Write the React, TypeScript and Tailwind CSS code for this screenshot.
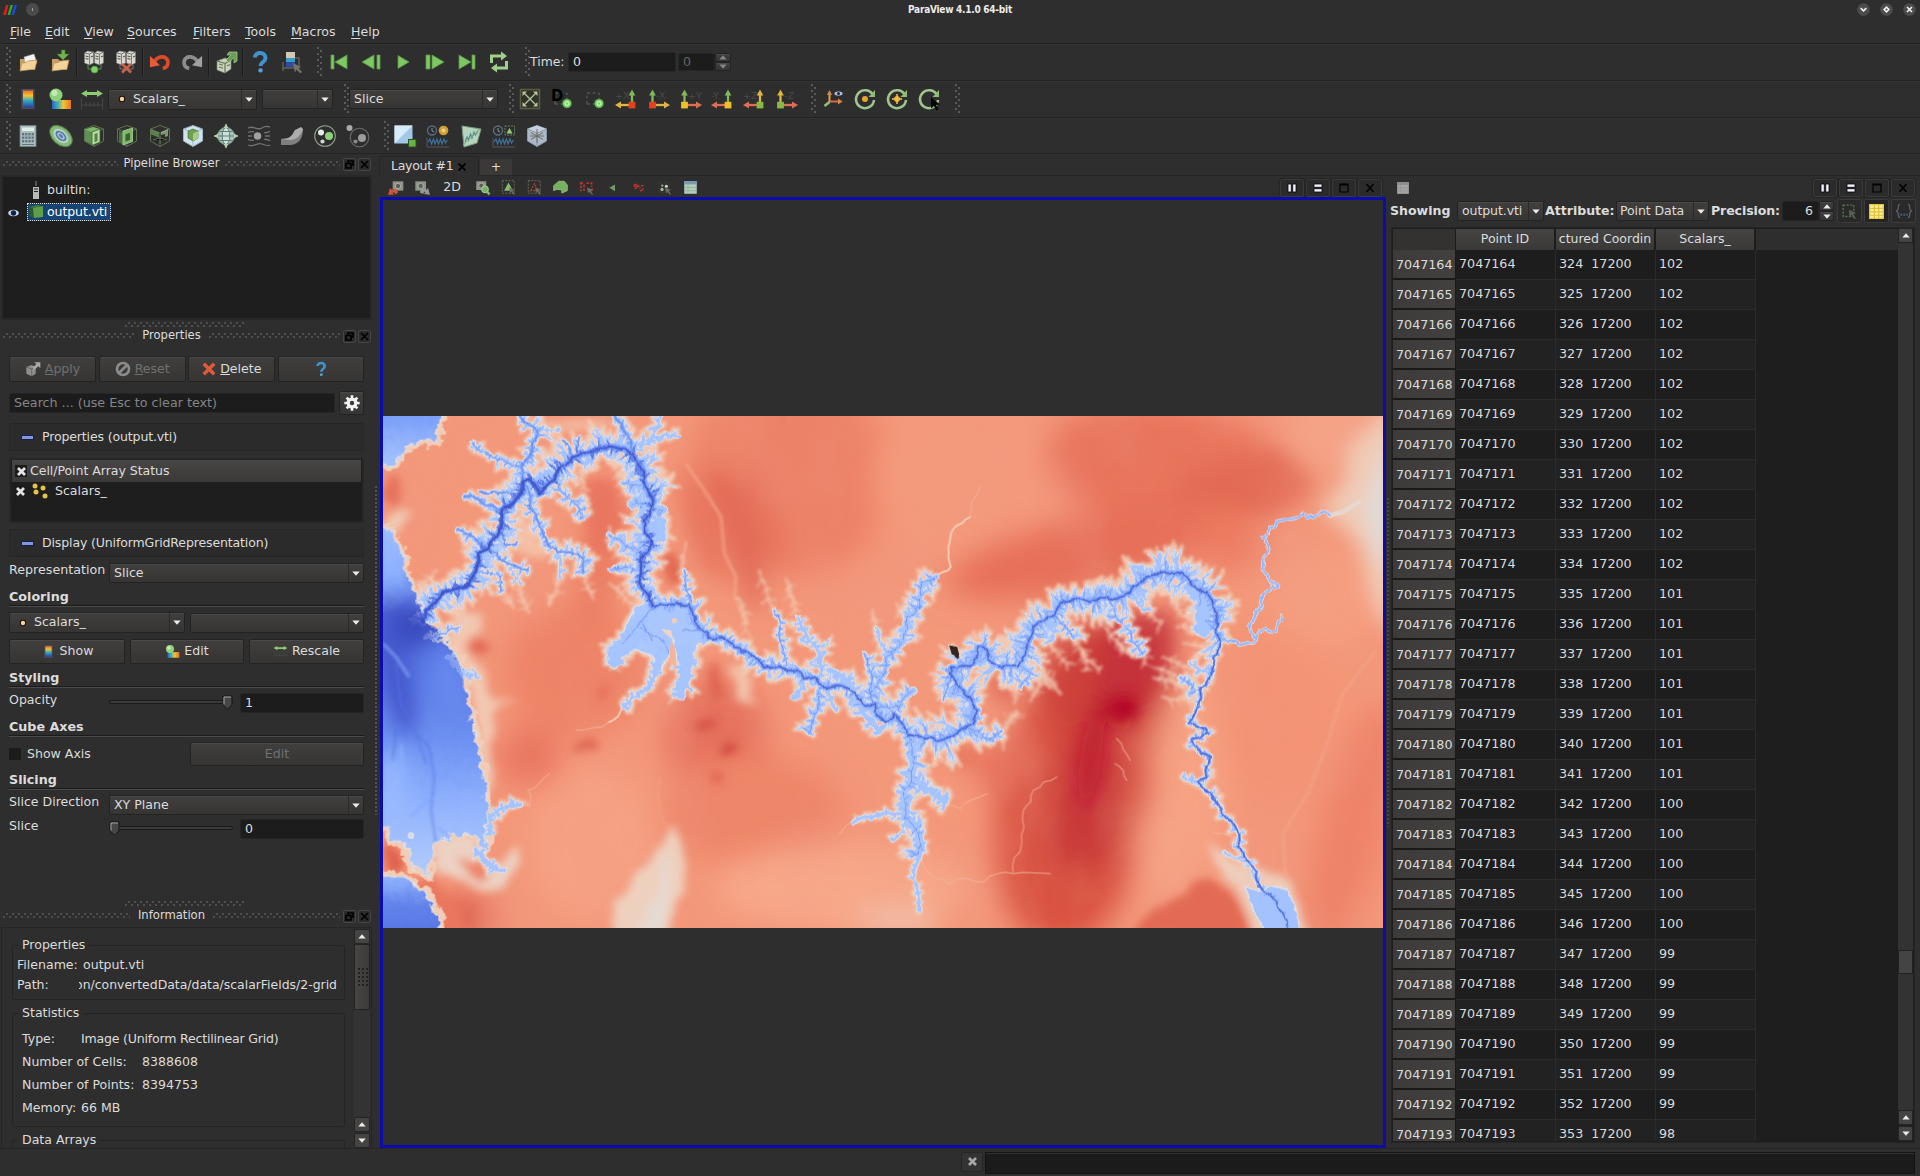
import React from "react";

type Kids = { children?: React.ReactNode };

/* ---------- small widgets ---------- */

const BTN = "rounded-[2px] border border-[#232323] bg-gradient-to-b from-[#403f3e] to-[#363534] shadow-[inset_0_1px_0_#4a4a49]";
const FIELD = "rounded-[2px] border border-[#262626] bg-[#1c1c1c]";

function Arrow({ up = false, dim = false }: { up?: boolean; dim?: boolean }) {
  return (
    <svg width="8" height="5" viewBox="0 0 8 5" className="shrink-0">
      <path d={up ? "M0.3 4.5 4 0.3 7.7 4.5Z" : "M0.3 0.5 4 4.7 7.7 0.5Z"} fill={dim ? "#858585" : "#ececec"} />
    </svg>
  );
}

function Combo({ className = "", children }: Kids & { className?: string }) {
  return (
    <div className={`flex shrink-0 items-center ${BTN} ${className}`}>
      <div className="flex h-full min-w-0 flex-1 items-center overflow-hidden whitespace-nowrap pl-1">{children}</div>
      <div className="flex h-full w-[15px] shrink-0 items-center justify-center border-l border-[#2a2a2a]">
        <Arrow />
      </div>
    </div>
  );
}

function Handle({ className = "" }: { className?: string }) {
  return (
    <div
      className={`h-[30px] w-[6px] shrink-0 bg-[radial-gradient(circle_at_1px_1px,#5a5a5a_0.9px,transparent_1.1px),radial-gradient(circle_at_4px_4px,#5a5a5a_0.9px,transparent_1.1px)] bg-[length:6px_6px] ${className}`}
    />
  );
}

function Dots({ className = "" }: { className?: string }) {
  return (
    <div
      className={`h-[6px] bg-[radial-gradient(circle_at_4px_1px,#4e4e4e_0.9px,transparent_1.1px),radial-gradient(circle_at_1px_4px,#4e4e4e_0.9px,transparent_1.1px)] bg-[length:6px_6px] ${className}`}
    />
  );
}

function Cell({ w = "w-8", children }: Kids & { w?: string }) {
  return <div className={`flex h-full shrink-0 items-center justify-center ${w}`}>{children}</div>;
}

function Sep() {
  return <div className="h-7 w-[2px] shrink-0 border-l border-[#1b1b1b] bg-[#363636]" />;
}

function Ico({ s = 24, children, className = "" }: Kids & { s?: number; className?: string }) {
  return (
    <svg width={s} height={s} viewBox="0 0 24 24" className={`shrink-0 overflow-visible ${className}`}>
      {children}
    </svg>
  );
}

/* ---------- icons ---------- */

const Folder = ({ save = false }: { save?: boolean }) => (
  <Ico>
    <path d="M4 9h6l2 2h7v9H4z" fill="#c89f61" />
    {!save && <path d="M8 7l10-3 3 9-11 3z" fill="#f3f3f3" stroke="#aaa" strokeWidth=".5" />}
    <path d="M4 21 6 13l4-.5 2-1.500 9-1-2 9z" fill="#f2d49a" stroke="#b58d50" strokeWidth=".7" />
    {save && <path d="M13.500 0h3.500v4h4l-6 6-6-6h4.500z" fill="#6fb34c" stroke="#3f7a2a" strokeWidth=".6" />}
  </Ico>
);

const Servers = ({ off = false }: { off?: boolean }) => (
  <Ico>
    {[2.5, 12.5].map((x) => (
      <g key={x}>
        <path d={`M${x} 3l3-2 6 1v11l-4 2-5-2z`} fill="#d9d9d2" stroke="#777" strokeWidth=".6" />
        <path d={`M${x} 3l5 1v11M${x + 5} 4l4-2`} fill="none" stroke="#77776f" strokeWidth=".9" />
        <path d={`M${x + 1} 6l3 .7M${x + 1} 8.500l3 .7M${x + 6.500} 7l2-1`} fill="none" stroke="#55554f" strokeWidth="1.100" />
      </g>
    ))}
    <path d="M6 15v4h13v-4" fill="none" stroke={off ? "#777" : "#5d8f50"} />
    {off ? <path d="M8 14l9 8.500M17 14l-9 8.500" stroke="#c9604a" strokeWidth="2.800" /> : <circle cx="12.500" cy="19.500" r="3.500" fill="#7fd267" stroke="#3f8a33" strokeWidth=".6" />}
  </Ico>
);

const Undo = ({ redo = false }: { redo?: boolean }) => (
  <Ico>
    <g transform={redo ? "translate(23 2) scale(-.92 .92)" : "translate(1 2) scale(.92)"}>
      <path d="M5 12C9 4 18 3 20.500 10c.6 4-1.500 7-5.500 8" fill="none" stroke={redo ? "#8d8d8d" : "#dd4a2a"} strokeWidth="4" />
      <path d="M1 4v12.500l11-2z" fill={redo ? "#a0a0a0" : "#e8593a"} />
    </g>
  </Ico>
);

function Cube({ fill = "#7db868", face = "#b6dc9f", line = "#5c7351", kind = "full" }: { fill?: string; face?: string; line?: string; kind?: string }) {
  return (
    <Ico>
      <path d="M12 1.500 21.500 5v12L12 22.500 2.500 17V5z" fill={kind === "solid" ? "#a9b9cb" : kind === "glass" ? "#cfe3ee" : "none"} stroke={line} strokeWidth="1" />
      {kind === "solid" && <path d="M2.500 5 12 1.500 21.500 5 12 9z" fill="#c4d0dd" />}
      <path d="M2.500 5 12 9l9.500-4M12 9v13.500" fill="none" stroke={line} strokeWidth=".9" />
      {kind === "full" && (
        <>
          <path d="M3 5.500 11 3l7 2v13l-7 3-8-4z" fill="#5f9150" />
          <path d="M3 5.500 11 3l7 2-8 3z" fill={fill} />
          <path d="M10 8l8-3v13l-8 3.500z" fill={face} stroke="#3f6633" strokeWidth=".8" />
          <path d="M12.500 10l3-1v8l-3 1.200z" fill="#558047" />
        </>
      )}
      {kind === "slice" && (
        <>
          <path d="M4 7l4 1.500v12L4 18z" fill="#4c713f" />
          <path d="M8 7 17.500 4v13.500L8 21z" fill={fill} stroke="#a9d294" strokeWidth=".8" />
          <path d="M10.500 10.500l4.500-1.700v7l-4.500 1.700z" fill="#3d5f32" />
        </>
      )}
      {kind === "extract" && (
        <>
          <path d="M3 5.500l8 3v5l-8-3z" fill={fill} opacity=".6" />
          <path d="M13 8l7-3v7l-3 1v-3l-4 1z" fill={face} opacity=".6" />
          <path d="M12 12v8M5 16l7-2 7 2" stroke={line} />
        </>
      )}
      {kind === "glass" && (
        <>
          <path d="M7 7l5-2 5 2v7l-5 3-5-3z" fill="#6ea04f" stroke="#3c5e2b" strokeWidth=".6" />
          <path d="M12 9.500l5-2.500v7l-5 3z" fill="#a4cf7e" />
        </>
      )}
      {kind === "solid" && <path d="M6 8.500l12 7M18 8.500l-12 7M12 5v14M5 12h14" stroke="#756c60" strokeWidth="1" />}
    </Ico>
  );
}

const Magic = () => (
  <Ico>
    <path d="M3 11l8-3 6 2v9l-6 4-8-3z" fill="#cfcfc2" stroke="#6f8a62" strokeWidth=".7" />
    <path d="M3 11l8 2.500V23M11 13.500 17 10M5 14l4 1.200M5 17l4 1.200M13 16l3-1.500" fill="none" stroke="#5b7c4c" strokeWidth="1.200" />
    <path d="M12 10l5-5h-4l2-3h8v9l-3 2V7.500l-5 5z" fill="#6a9e55" stroke="#a9cf97" strokeWidth=".7" />
  </Ico>
);

const Question = ({ s = 24 }: { s?: number }) => (
  <Ico s={s}>
    <path d="M7 7.500C7 1.500 17.500 1.500 17.500 8c0 4-5 4-5 8" fill="none" stroke="#3f93cf" strokeWidth="4" />
    <rect x="10.300" y="18.300" width="4.400" height="4.200" rx="1.800" fill="#4aa0d8" />
  </Ico>
);

const Rainbow = ({ id, x, y, w, h, flat = false }: { id: string; x: number; y: number; w: number; h: number; flat?: boolean }) => (
  <>
    <linearGradient id={id} x1="0" y1="0" x2={flat ? "1" : "0"} y2={flat ? "0" : "1"}>
      <stop offset="0" stopColor={flat ? "#2f63c9" : "#e8702a"} />
      <stop offset=".3" stopColor={flat ? "#38b0c0" : "#f3c52c"} />
      <stop offset=".6" stopColor={flat ? "#f3c52c" : "#2fa9c4"} />
      <stop offset="1" stopColor={flat ? "#e8702a" : "#2a3f9e"} />
    </linearGradient>
    <rect x={x} y={y} width={w} height={h} fill={`url(#${id})`} />
  </>
);

const ColorMap = ({ s = 24, id }: { s?: number; id: string }) => (
  <Ico s={s}>
    <rect x="5.500" y="2" width="13" height="20" fill="#4e4e5c" />
    <Rainbow id={id} x={7} y={3.5} w={10} h={17} />
  </Ico>
);

const EditMap = ({ s = 24, id }: { s?: number; id: string }) => (
  <Ico s={s}>
    <Rainbow id={id} x={4} y={13} w={19} h={9} flat />
    <circle cx="8" cy="8" r="6.500" fill="#8fd07a" />
    <circle cx="6.500" cy="6" r="3" fill="#c3eab3" />
  </Ico>
);

const Range = ({ s = 24 }: { s?: number }) => (
  <Ico s={s}>
    <path d="M1 6.500 7 3v2h10V3l6 3.500L17 10V8H7v2z" fill="#8ccb72" />
    <path d="M1.500 11v12M22.500 11v12M1.500 18h21M6 15v5M10 15v5M14 15v5M18 15v5" stroke="#474747" fill="none" />
  </Ico>
);

const Legend = () => (
  <Ico>
    <rect x="6" y="2" width="9" height="6" fill="#d3c9b4" />
    <rect x="6" y="8" width="9" height="4" fill="#3d9ac0" />
    <rect x="6" y="12" width="9" height="5" fill="#2c4ba0" />
    <path d="M3 12v9M3 18h17M15 8h4v9" fill="none" stroke="#65625c" strokeWidth="1.400" />
    <path d="M13 13l8 4-3 1 4 4-1.500 1.500-4-4-1.500 3z" fill="#76736c" />
  </Ico>
);

const GREEN = "#7dc862";
const Play = ({ d }: { d: string }) => (
  <Ico>
    <path d={d} fill={GREEN} stroke="#5a9745" strokeWidth=".8" />
  </Ico>
);

const Loop = () => (
  <Ico>
    <path d="M4.500 13V6H17M19.500 11v7H7" fill="none" stroke="#9fd089" strokeWidth="3" />
    <path d="M14 1.500 20 6l-6 4.500zM10 13.500 4 18l6 4.500z" fill="#9fd089" />
  </Ico>
);

const ResetCam = () => (
  <Ico>
    <rect x="2.500" y="2.500" width="19" height="19" fill="#2f3226" stroke="#5c5c3e" strokeWidth="1.500" />
    <path d="M6 6l12 12M18 6 6 18" stroke="#b9c3a2" strokeWidth="1.300" />
    <path d="M4.500 4.500H9L4.500 9zM19.500 4.500H15L19.500 9zM4.500 19.500V15L9 19.500zM19.500 19.500V15L15 19.500z" fill="#b9c3a2" />
  </Ico>
);

const ZoomBox = ({ d = false }: { d?: boolean }) => (
  <Ico>
    <path d="M5 17V6h12v7M5 17h8" fill="none" stroke="#62625c" strokeDasharray="3 2.500" />
    <circle cx="17" cy="16.500" r="4.500" fill="#77d765" stroke="#3e7f35" strokeWidth=".6" />
    <circle cx="17" cy="16.500" r="1.900" fill="none" stroke="#e6ffe0" />
    {d && (
      <text x="1" y="13.500" fontSize="15" fontWeight="bold" fill="#000">
        D
      </text>
    )}
  </Ico>
);

function Axis({ flip = false, up, side, box, label }: { flip?: boolean; up: string; side: string; box: string; label: string }) {
  const cx = flip ? 6.500 : 18;
  return (
    <Ico>
      <text x={flip ? 10 : 1} y="12" fontSize="9.500" fill="#4a4a46">
        {label}
      </text>
      <path d={`M${cx} 16V6`} stroke={up} strokeWidth="2.300" />
      <path d={`M${cx - 3.300} 8.500 ${cx} 2.500l3.300 6z`} fill={up} />
      <path d={flip ? "M7 18h12" : "M17 18H5"} stroke={side} strokeWidth="2.300" />
      <path d={flip ? "M18 14.500 24 18l-6 3.500z" : "M7 14.500 1 18l6 3.500z"} fill={side} />
      <rect x={cx - 3.400} y="14.800" width="6.800" height="6.600" fill={box} />
    </Ico>
  );
}

const Rotate = ({ kind }: { kind: string }) => (
  <Ico>
    <path d="M20 8A9 9 0 1 0 21 13" fill="none" stroke="#9fc48c" strokeWidth="2.600" />
    <path d="M22 3v7h-6.500z" fill="#8dbd74" />
    {kind !== "pick" && <circle cx="12" cy="12" r="3" fill="#e7a62d" />}
    {kind === "center" && <path d="M12 7v10M7 12h10" stroke="#f1c34a" strokeWidth="1.500" />}
    {kind === "pick" && <path d="M14 10.500l9 7-4 .4 2.500 4.600-2 1-2.500-4.600-3 2.500z" fill="#050505" />}
  </Ico>
);

const CenterAxes = () => (
  <Ico>
    <path d="M8.500 15V6" stroke="#e0a43c" strokeWidth="2" />
    <path d="M8.500 15l-5 4" stroke="#8ec172" strokeWidth="2.600" />
    <path d="M9 14.500h9" stroke="#d8694e" strokeWidth="2" />
    <path d="M6 8l2.500-5L11 8zM17 11.500l4.500 3-4.500 3z" fill="#d98a45" />
    <ellipse cx="17.500" cy="6.500" rx="4" ry="2" fill="#b9c5da" />
    <circle cx="17.500" cy="6.500" r="1.600" fill="#1c2b55" />
  </Ico>
);

const Calc = () => (
  <Ico>
    <rect x="4" y="1.500" width="16" height="21" fill="#a9bdc0" stroke="#6f8285" strokeWidth=".8" />
    <rect x="6" y="3.500" width="12" height="3.500" fill="#dfeee6" />
    {[9, 12.500, 16].map((y) => [6, 9.200, 12.400, 15.600].map((x) => <rect key={`${x}-${y}`} x={x} y={y} width="2.200" height="2.400" fill="#5f777b" />))}
    <path d="M6 20.500h12" stroke="#5f777b" />
  </Ico>
);

const Contour = () => (
  <Ico>
    <g transform="rotate(42 12 12)">
      <ellipse cx="12" cy="12" rx="13" ry="8.500" fill="#86b878" stroke="#4e8146" />
      <ellipse cx="12" cy="12" rx="9" ry="5.600" fill="#b3d1c6" />
      <ellipse cx="12" cy="12" rx="6.500" ry="3.900" fill="#5379a5" />
      <ellipse cx="12" cy="12" rx="4.500" ry="2.400" fill="#a5c1df" />
      <ellipse cx="12" cy="12" rx="2.500" ry="1.200" fill="#5379a5" />
    </g>
  </Ico>
);

const Glyph = () => (
  <Ico>
    <path d="M12 0v24M0 12h24" stroke="#9bb58e" strokeWidth="1.500" />
    <circle cx="12" cy="12" r="8.500" fill="#aac4bb" stroke="#71917a" />
    <ellipse cx="12" cy="12" rx="3.800" ry="8.500" fill="#cfe0da" stroke="#5d7e78" />
    <path d="M4 12h16M5.500 7.500h13M5.500 16.500h13" stroke="#5d7e78" />
    <path d="M12 0l-2.500 4h5zM12 24l-2.500-4h5zM0 12l4-2.500v5zM24 12l-4-2.500v5z" fill="#b9cfae" />
  </Ico>
);

const Stream = () => (
  <Ico>
    <path d="M1 4c6-3 9 3 14 0s6-1 8-1M1 8.500c4-2 5 0 6-1M17 8.500c3 1 4-1 6-1M1 15.500c4 2 5 0 6 1M17 15.500c3-1 4 1 6 1M1 21c6 3 9-3 14-1s6 2 8 1M1 12h4M18 12h5" fill="none" stroke="#727272" strokeWidth="1.300" />
    <circle cx="10.500" cy="12" r="3.800" fill="#a0a0a0" />
  </Ico>
);

const Warp = () => (
  <Ico>
    <path d="M1 15c9 0 11-3 14-9l8-1c0 11-6 16-13 16H1z" fill="#7f7f7f" />
    <path d="M1 15c9 0 11-3 14-9l6-3 2 2c-3 9-9 11-13 11z" fill="#adadad" />
  </Ico>
);

const Group = ({ on = false }: { on?: boolean }) => (
  <Ico>
    <circle cx={on ? 12 : 13.500} cy={on ? 12 : 13.500} r={on ? 10.300 : 9.300} fill="none" stroke={on ? "#8fa087" : "#6c6c6c"} strokeWidth="1.100" />
    <circle cx={on ? 8 : 3.500} cy={on ? 8.500 : 4} r="3" fill={on ? "#e7efe4" : "#a9a9a9"} />
    <circle cx="16" cy={on ? 12 : 14} r="4" fill={on ? "#8ed37a" : "#9c9c9c"} />
    <circle cx="9.500" cy="17.500" r="2.100" fill={on ? "#cfdccb" : "#8a8a8a"} />
  </Ico>
);

const Extract = () => (
  <Ico>
    <rect x="1.500" y="1.500" width="18" height="18" fill="#a2c8e8" />
    <path d="M1.500 1.500h18l-18 18z" fill="#d8ebf8" />
    <rect x="15.500" y="15.500" width="7.500" height="7.500" fill="#69b344" stroke="#2c521c" />
  </Ico>
);

const Plot = ({ kind }: { kind: string }) => (
  <Ico>
    <circle cx="6" cy="6.500" r="4.500" fill="none" stroke="#5a6c82" strokeWidth="1.300" />
    <path d="M6 4v3l2 1" fill="none" stroke="#899" />
    {kind === "gold" ? (
      <>
        <circle cx="17.500" cy="6.500" r="4.800" fill="#cf9f35" />
        <circle cx="17.500" cy="6.500" r="2" fill="#ecd07a" />
      </>
    ) : (
      <>
        <rect x="13" y="2" width="9.500" height="9" fill="none" stroke="#68805c" strokeDasharray="2 1" />
        <path d="M14.500 9.500l3-5.500 3 5.500z" fill="#96cf78" />
      </>
    )}
    <path d="M2 18l2-3 1.500 5 2-5 1.500 5 2-5 1.500 5 2-5 1.500 5 2-5 1.500 4 2-3" fill="none" stroke="#3f7099" strokeWidth="1.200" />
    <path d="M1 14v9h22" fill="none" stroke="#555" />
  </Ico>
);

const PlotLine = () => (
  <Ico>
    <path d="M3 2l19 3-4 14-13 4z" fill="#b5d3bd" stroke="#7b9d7d" />
    <path d="M6 18l2-5 1.500 3 2-6 1.500 4 2-6 1.500 3 3-5" fill="none" stroke="#4f8f98" strokeWidth="1.200" />
    <path d="M4 21 21 5" stroke="#7fae6e" />
  </Ico>
);

const Picture = ({ s = 16, kind }: { s?: number; kind: string }) => (
  <Ico s={s} className="opacity-90">
    {(kind === "undo" || kind === "redo" || kind === "find") && (
      <>
        <rect x={kind === "undo" ? 7 : 2} y="2" width="16" height="14" fill="#9a9e94" />
        <circle cx={kind === "undo" ? 15 : 10} cy="9" r="4" fill="#5c6658" stroke="#d5ddd0" />
      </>
    )}
    {kind === "undo" && <path d="M0 22l3-10 3 3c4-3 9-1 9 4l-5 3c1-3-1-4-3-3l2 3z" fill="#dc5a42" />}
    {kind === "redo" && <path d="M24 22l-3-10-3 3c-4-3-9-1-9 4l5 2c1-3 1-4 3-3l-2 3z" fill="#a3a3a3" />}
    {kind === "find" && (
      <>
        <path d="M20 19l3 4" stroke="#8cd477" strokeWidth="4" />
        <circle cx="16" cy="15" r="5.500" fill="#7fc06c" stroke="#b7e5a8" strokeWidth="1.500" />
      </>
    )}
    {(kind === "selg" || kind === "selr") && <rect x="2" y="1" width="19" height="20" fill="none" stroke="#69745f" strokeWidth="1.600" strokeDasharray="3 2" />}
    {kind === "selg" && <path d="M5 17 12 4l7 13z" fill="#8fce77" />}
    {kind === "selr" && <path d="M6 17 12 6l6 11z" fill="none" stroke="#c44a33" strokeWidth="1.800" strokeDasharray="3 2" />}
    {kind === "frust" && <path d="M1 9 9 2h9l5 6v9l-9 4v-5l-8-1-5 2z" fill="#7fbf65" stroke="#b5dba4" />}
    {kind === "tabler" && <path d="M3 3v15M3 4l5 4v9M12 5h8v6M21 13v5h-6" fill="none" stroke="#b93a2c" strokeWidth="3" strokeDasharray="4 2" />}
    {kind === "tri" && <path d="M16 7v11l-9-5.500z" fill="#79a868" />}
    {kind === "rdots" && <path d="M5 7h5v6H6zM11 8l4 6M14 17h5v-4M16 9h4" fill="#8d2c22" stroke="#b93a2c" strokeWidth="2.400" strokeDasharray="4 1.500" />}
    {kind === "wdots" && (
      <>
        <rect x="3" y="3" width="17" height="17" fill="#30332e" stroke="#4a4a4a" strokeDasharray="2 2" />
        <circle cx="8" cy="15" r="2.500" fill="#b8d6aa" />
        <circle cx="8.500" cy="9" r="1.800" fill="#a8bfa0" />
        <circle cx="15" cy="10" r="2.500" fill="#dfe8da" />
      </>
    )}
    {["selg", "selr", "tabler", "wdots"].includes(kind) && <path d="M13 12l9 4-3.500 1.500 4 5-2 1-4-5-2 3z" fill="#76736a" />}
    {(kind === "sheet" || kind === "sheetoff") && (
      <>
        <rect x="2" y="2" width="20" height="20" fill={kind === "sheet" ? "#c7dfcc" : "#b4b4b4"} />
        <rect x="2" y="2" width="20" height="5" fill={kind === "sheet" ? "#7fa6c4" : "#999"} />
        <path d="M2 12h20M2 17h20M8 7v15" stroke={kind === "sheet" ? "#9cc4a6" : "#a0a0a0"} strokeWidth="1.500" />
      </>
    )}
  </Ico>
);

/* ---------- shared pieces ---------- */

const DockBtn = ({ x = false }: { x?: boolean }) => (
  <div className="flex h-[13px] w-[13px] items-center justify-center rounded-[2px] border border-[#474747] bg-[#2b2b2b]">
    <svg width="9" height="9" viewBox="0 0 9 9" fill="none" stroke="#000" strokeWidth="1.600">
      {x ? <path d="M1 1l7 7M8 1L1 8" /> : <path d="M3 3V1h5v4H6M1 3.500h5v4.500H1z" />}
    </svg>
  </div>
);

function DockTitle({ title, side, className = "" }: { title: string; side: string; className?: string }) {
  return (
    <div className={`flex h-[20px] items-center pl-[3px] pr-[2px] ${className}`}>
      <Dots className={side} />
      <div className="flex-1 text-center text-[11.6px] leading-none">{title}</div>
      <Dots className={side} />
      <div className="ml-[3px] flex gap-[2px]">
        <DockBtn />
        <DockBtn x />
      </div>
    </div>
  );
}

function ViewButtons() {
  return (
    <div className="flex gap-[2px]">
      {["v", "h", "m", "x"].map((k) => (
        <div key={k} className="flex h-[18px] w-6 items-center justify-center rounded-[2px] border border-[#3a3a3a] bg-[#2b2b2b] shadow-[0_0_0_1px_#252525]">
          <svg width="10" height="10" viewBox="0 0 10 10">
            {k === "v" && <path d="M1 1h3.300v8H1zM5.700 1H9v8H5.700z" fill="#f2f2ff" stroke="#000" strokeWidth=".8" />}
            {k === "h" && <path d="M1 1h8v3.300H1zM1 5.700h8V9H1z" fill="#f2f2ff" stroke="#000" strokeWidth=".8" />}
            {k === "m" && <path d="M1 1h8v8H1zM1 2h8" fill="none" stroke="#000" strokeWidth="1.200" />}
            {k === "x" && <path d="M1.500 1l7 8M8.500 1l-7 8" stroke="#000" strokeWidth="1.500" />}
          </svg>
        </div>
      ))}
    </div>
  );
}

const ScrollBtn = ({ up = false }: { up?: boolean }) => (
  <div className="flex h-[15px] w-full shrink-0 items-center justify-center rounded-[2px] border border-[#242424] bg-[#454443]">
    <Arrow up={up} />
  </div>
);

const Track = ({ className = "" }: { className?: string }) => (
  <div className={`bg-[#242424] bg-[radial-gradient(circle,#343434_0.7px,transparent_0.9px)] bg-[length:2px_2px] ${className}`} />
);

const CheckX = () => (
  <div className="flex h-[12px] w-[12px] shrink-0 items-center justify-center bg-[#1c1c1c]">
    <svg width="9" height="9" viewBox="0 0 9 9" stroke="#e4e4e4" strokeWidth="2.800">
      <path d="M1 1l7 7M8 1L1 8" />
    </svg>
  </div>
);

const PointDot = () => (
  <svg width="8" height="8" viewBox="0 0 8 8" className="shrink-0">
    <circle cx="4" cy="4" r="3.200" fill="#1b0f06" />
    <circle cx="4" cy="4" r="2.200" fill="#f6d3a0" />
  </svg>
);

/* ---------- terrain slice ---------- */

type P = [number, number];

function mulberry(seed: number) {
  let a = seed;
  return () => {
    a = (a + 0x6d2b79f5) | 0;
    let t = Math.imul(a ^ (a >>> 15), 1 | a);
    t = (t + Math.imul(t ^ (t >>> 7), 61 | t)) ^ t;
    return ((t ^ (t >>> 14)) >>> 0) / 4294967296;
  };
}

const E = 1482;
const east = (pts: P[]): P[] => pts.map(([x, y]) => [x + E, y]);

const canyonWest: P[] = [[140, 635], [150, 600], [180, 575], [200, 545], [240, 535], [280, 520], [300, 480], [310, 430], [335, 415], [360, 380], [375, 350], [375, 300], [410, 280], [435, 250], [440, 215], [465, 205], [490, 250], [530, 210], [550, 175], [590, 140], [650, 125], [700, 108], [740, 115], [775, 140], [800, 180], [805, 225], [830, 265], [825, 305], [803, 330], [820, 380], [825, 405], [800, 435], [795, 480], [790, 515], [825, 570], [830, 590]];
const canyonMid: P[] = [[830, 590], [870, 585], [900, 578], [940, 582], [960, 620], [965, 655], [1010, 688], [1035, 680], [1075, 710], [1125, 735], [1165, 772], [1210, 768], [1265, 780], [1285, 805], [1310, 798], [1340, 830], [1380, 825], [1420, 835], [1450, 865], [1470, 890], [1498, 880], [1502, 915], [1532, 932], [1557, 912], [1582, 945], [1597, 975]];
const canyonEast: P[] = east([[115, 975], [165, 985], [210, 990], [250, 975], [310, 940], [322, 900], [300, 860], [260, 820], [238, 790], [245, 770], [300, 768], [318, 745], [325, 710], [350, 715], [358, 750], [400, 770], [445, 768], [470, 720], [490, 650], [520, 630], [555, 615], [580, 575], [620, 565], [660, 575], [700, 562], [740, 565], [780, 545], [830, 500], [890, 485], [935, 487], [970, 525], [1020, 560], [1040, 620], [1050, 690]]);
const upperRiver: P[] = east([[1050, 690], [1030, 740], [1025, 790], [990, 835], [985, 890], [955, 940], [1015, 970], [965, 985], [975, 1010], [1020, 1040], [1010, 1100], [985, 1115], [1030, 1165], [1060, 1215], [1100, 1255], [1105, 1310], [1130, 1350], [1160, 1385], [1165, 1425], [1210, 1465], [1240, 1510], [1250, 1560]]);

type River = { p: P[]; w: number; len: number; step: number; deep: number };
const rivers: River[] = [
  { p: canyonWest, w: 20, len: 48, step: 10, deep: 9 },
  { p: canyonMid, w: 17, len: 30, step: 14, deep: 6 },
  { p: canyonEast, w: 18, len: 54, step: 10, deep: 6 },
  { p: upperRiver, w: 9, len: 16, step: 22, deep: 5 },
  { p: [[430, 17], [485, 60], [470, 110], [440, 160], [440, 215]], w: 12, len: 28, step: 14, deep: 4 },
  { p: [[290, 95], [330, 130], [380, 150], [435, 172]], w: 9, len: 18, step: 15, deep: 2 },
  { p: [[265, 260], [290, 255], [330, 285], [375, 300]], w: 10, len: 14, step: 15, deep: 3 },
  { p: [[310, 240], [380, 250], [430, 260]], w: 6, len: 12, step: 15, deep: 3 },
  { p: [[245, 360], [290, 380], [335, 415]], w: 11, len: 18, step: 15, deep: 3 },
  { p: [[455, 230], [460, 290], [490, 340], [510, 390], [550, 425], [620, 445], [625, 490]], w: 9, len: 28, step: 14, deep: 3 },
  { p: [[545, 425], [550, 500]], w: 5, len: 16, step: 18, deep: 0 },
  { p: [[540, 210], [575, 260], [620, 320]], w: 9, len: 24, step: 14, deep: 2 },
  { p: [[480, 55], [545, 60]], w: 4, len: 12, step: 16, deep: 0 },
  { p: [[715, 17], [750, 70], [770, 130]], w: 12, len: 20, step: 14, deep: 4 },
  { p: [[855, 17], [835, 80], [780, 115]], w: 7, len: 22, step: 15, deep: 0 },
  { p: [[910, 80], [860, 75], [800, 100]], w: 6, len: 18, step: 15, deep: 0 },
  { p: [[560, 90], [590, 140]], w: 7, len: 10, step: 14, deep: 3 },
  { p: [[610, 80], [605, 135]], w: 6, len: 8, step: 14, deep: 3 },
  { p: [[335, 412], [380, 450], [455, 480]], w: 8, len: 18, step: 15, deep: 3 },
  { p: [[305, 485], [365, 490], [378, 540]], w: 5, len: 12, step: 15, deep: 2 },
  { p: [[400, 460], [430, 520]], w: 4, len: 12, step: 18, deep: 0 },
  { p: [[375, 345], [385, 400], [420, 400]], w: 6, len: 12, step: 14, deep: 3 },
  { p: [[700, 375], [750, 410], [820, 410]], w: 14, len: 26, step: 13, deep: 2 },
  { p: [[705, 480], [750, 470], [795, 480]], w: 13, len: 22, step: 13, deep: 2 },
  { p: [[740, 220], [800, 220]], w: 15, len: 24, step: 12, deep: 2 },
  { p: [[770, 280], [820, 290], [860, 300]], w: 26, len: 20, step: 12, deep: 2 },
  { p: [[820, 400], [860, 370], [850, 330]], w: 22, len: 24, step: 12, deep: 0 },
  { p: [[925, 480], [930, 540], [945, 585]], w: 8, len: 14, step: 14, deep: 2 },
  { p: [[1195, 600], [1205, 620], [1212, 690], [1230, 765]], w: 7, len: 18, step: 15, deep: 2 },
  { p: [[1265, 620], [1300, 690], [1335, 740], [1335, 795]], w: 9, len: 28, step: 14, deep: 0 },
  { p: [[1330, 830], [1325, 900], [1300, 965]], w: 14, len: 28, step: 13, deep: 2 },
  { p: [[1340, 835], [1380, 900]], w: 7, len: 12, step: 12, deep: 0 },
  { p: [[1285, 800], [1260, 860]], w: 9, len: 14, step: 12, deep: 0 },
  { p: [[1465, 730], [1490, 800], [1490, 880]], w: 10, len: 22, step: 13, deep: 2 },
  { p: [[1360, 780], [1430, 830], [1510, 960]], w: 16, len: 24, step: 13, deep: 0 },
  { p: [[250, 650], [210, 670], [150, 680]], w: 5, len: 14, step: 14, deep: 2 },
  { p: [[310, 800], [260, 790], [220, 740]], w: 7, len: 18, step: 14, deep: 0 },
  { p: [[435, 1183], [390, 1190], [340, 1220], [340, 1270]], w: 9, len: 16, step: 14, deep: 0 },
  { p: [[380, 1380], [335, 1360], [300, 1320]], w: 14, len: 12, step: 14, deep: 0 },
  { p: [[800, 630], [750, 700], [715, 755]], w: 34, len: 22, step: 12, deep: 0 },
  { p: [[870, 700], [840, 790], [800, 845], [745, 885]], w: 10, len: 16, step: 14, deep: 0 },
  { p: [[915, 720], [930, 780], [915, 855]], w: 24, len: 22, step: 12, deep: 0 },
  { p: east([[200, 500], [155, 515], [150, 590], [110, 620], [100, 690], [50, 740], [20, 830], [0, 850]]), w: 16, len: 34, step: 14, deep: 2 },
  { p: east([[20, 650], [30, 690], [50, 740]]), w: 6, len: 14, step: 14, deep: 0 },
  { p: east([[115, 975], [130, 1040], [125, 1100], [100, 1150], [105, 1220], [145, 1270], [145, 1330]]), w: 24, len: 28, step: 14, deep: 2 },
  { p: east([[145, 1330], [130, 1400], [150, 1500]]), w: 8, len: 10, step: 22, deep: 0 },
  { p: east([[-50, 1235], [0, 1222], [100, 1210]]), w: 9, len: 14, step: 22, deep: 0 },
  { p: east([[110, 1230], [70, 1290]]), w: 6, len: 12, step: 20, deep: 0 },
  { p: east([[130, 1100], [180, 1140], [225, 1175]]), w: 18, len: 30, step: 12, deep: 0 },
  { p: east([[130, 840], [80, 890], [20, 890]]), w: 17, len: 20, step: 13, deep: 2 },
  { p: east([[395, 962], [350, 985], [300, 945]]), w: 9, len: 24, step: 12, deep: 2 },
  { p: east([[220, 870], [235, 830], [245, 785]]), w: 6, len: 8, step: 14, deep: 2 },
  { p: east([[450, 830], [480, 790], [445, 768]]), w: 14, len: 34, step: 12, deep: 2 },
  { p: east([[720, 575], [770, 650], [815, 730]]), w: 8, len: 34, step: 15, deep: 2 },
  { p: east([[560, 620], [610, 680]]), w: 9, len: 32, step: 14, deep: 2 },
  { p: east([[540, 640], [545, 690]]), w: 8, len: 18, step: 12, deep: 0 },
  { p: east([[790, 550], [820, 600]]), w: 8, len: 20, step: 12, deep: 0 },
  { p: east([[870, 430], [870, 470]]), w: 9, len: 18, step: 12, deep: 0 },
  { p: east([[790, 470], [840, 490]]), w: 12, len: 22, step: 12, deep: 0 },
  { p: east([[960, 540], [1020, 600]]), w: 22, len: 20, step: 12, deep: 0 },
  { p: east([[1000, 600], [1000, 660]]), w: 40, len: 14, step: 12, deep: 0 },
  { p: east([[930, 800], [975, 840]]), w: 10, len: 26, step: 12, deep: 2 },
  { p: east([[960, 760], [1020, 785]]), w: 7, len: 20, step: 12, deep: 0 },
  { p: east([[940, 1090], [950, 1105], [985, 1115]]), w: 6, len: 12, step: 14, deep: 0 },
  { p: east([[1060, 1325], [1100, 1345], [1130, 1355]]), w: 4, len: 8, step: 20, deep: 0 },
];

/* Side valleys that stay above the blue range of the colour map. */
const paleValleys: P[][] = [
  east([[560, 620], [620, 690], [650, 775]]), east([[600, 660], [685, 775]]), east([[540, 700], [590, 760]]), east([[680, 620], [740, 690], [760, 720]]),
  east([[760, 620], [800, 680], [825, 755]]), east([[820, 570], [870, 640]]), east([[900, 560], [930, 610]]), east([[850, 800], [920, 820], [980, 850]]),
  east([[850, 770], [930, 800]]), east([[880, 740], [960, 770], [1020, 790]]), east([[880, 860], [960, 870]]), east([[920, 650], [1000, 660]]),
  east([[940, 700], [1040, 700]]), east([[480, 870], [510, 810], [490, 780]]), east([[540, 830], [520, 790]]), east([[570, 850], [530, 800]]), east([[430, 880], [440, 820]]),
  east([[400, 1020], [410, 940], [440, 910]]), east([[310, 660], [325, 710]]), east([[290, 700], [310, 760]]),
  east([[220, 880], [230, 800]]), east([[10, 600], [30, 700]]), east([[80, 580], [110, 640]]), east([[860, 410], [875, 450]]), east([[770, 460], [830, 480]]),
  [[410, 590], [380, 540]], [[460, 610], [430, 540]], [[520, 585], [550, 500], [560, 440]], [[650, 565], [630, 500]], [[930, 400], [940, 560]], [[1150, 480], [1190, 590]],
  [[1230, 500], [1260, 600]], [[1080, 560], [1110, 660]], [[460, 1185], [400, 1185]], [[880, 880], [930, 830]], [[700, 780], [760, 720]], [[180, 480], [130, 560]],
  [[540, 80], [560, 180]], [[610, 160], [620, 230]], [[700, 150], [740, 240]], [[610, 400], [560, 430]], [[700, 350], [720, 420]], [[700, 520], [760, 580]],
];

const thinWhite: P[][] = [
  east([[300, 320], [250, 355], [235, 410], [242, 470], [200, 500]]),
  [[820, 840], [740, 890], [700, 935]],
];

const faintWhite: P[][] = [
  east([[330, 230], [300, 320]]),
  east([[240, 1420], [340, 1415], [430, 1390], [455, 1300], [460, 1200], [490, 1140], [560, 1100]]),
  east([[180, 1180], [270, 1195], [350, 1150]]),
  [[700, 935], [600, 960]],
  [[460, 1185], [455, 1140], [520, 1090]],
  east([[1030, 1270], [1080, 1275], [1110, 1310]]),
  east([[430, 1390], [540, 1390]]),
  east([[145, 1330], [190, 1400], [240, 1420]]),
  [[1390, 1270], [1440, 1230], [1490, 1222]],
  east([[780, 1050], [740, 985]]),
  east([[770, 1110], [735, 1060]]),
];

const thinBlue: P[][] = [
  east([[1050, 690], [1080, 690], [1110, 705], [1160, 685], [1160, 600], [1180, 590], [1190, 545], [1225, 530], [1190, 490], [1190, 430], [1178, 380], [1215, 350], [1270, 325], [1330, 318], [1380, 315]]),
  east([[1160, 680], [1220, 660], [1235, 615]]),
];

const line = (p: P[]) => "M" + p.map(([x, y]) => `${x.toFixed(1)} ${y.toFixed(1)}`).join("L");

/* Roughens a polyline by repeated midpoint displacement. */
function rough(p: P[], rnd: () => number, amp: number): P[] {
  let cur = p;
  for (let k = 0; k < 2; k++) {
    const out: P[] = [cur[0]];
    for (let i = 1; i < cur.length; i++) {
      const [ax, ay] = cur[i - 1];
      const [bx, by] = cur[i];
      const l = Math.hypot(bx - ax, by - ay);
      const d = (rnd() - 0.5) * amp * l;
      out.push([(ax + bx) / 2 - ((by - ay) / (l || 1)) * d, (ay + by) / 2 + ((bx - ax) / (l || 1)) * d], [bx, by]);
    }
    cur = out;
  }
  return cur;
}

type Spikes = { blue: string[]; pale: string[] };

function spike(x: number, y: number, ang: number, len: number, w: number, rnd: () => number, depth: number, out: Spikes) {
  const bend = (rnd() - 0.5) * 0.5;
  const nx = -Math.sin(ang);
  const ny = Math.cos(ang);
  const wedge = (l: number, ww: number) => {
    const mx = x + Math.cos(ang) * l * 0.5;
    const my = y + Math.sin(ang) * l * 0.5;
    const tx = mx + Math.cos(ang + bend) * l * 0.5;
    const ty = my + Math.sin(ang + bend) * l * 0.5;
    return line([[x + nx * ww, y + ny * ww], [mx + nx * ww * 0.45, my + ny * ww * 0.45], [tx, ty], [mx - nx * ww * 0.45, my - ny * ww * 0.45], [x - nx * ww, y - ny * ww]]) + "Z";
  };
  out.blue.push(wedge(len, w));
  out.pale.push(wedge(len * 1.35, w * 1.3));
  if (depth > 0) {
    const n = 1 + Math.floor(rnd() * 3);
    for (let i = 0; i < n; i++) {
      const t = 0.3 + rnd() * 0.45;
      const s = rnd() < 0.5 ? -1 : 1;
      spike(x + Math.cos(ang) * len * t, y + Math.sin(ang) * len * t, ang + s * (0.4 + rnd() * 0.4), len * (0.3 + rnd() * 0.3), w * 0.5, rnd, depth - 1, out);
    }
  }
}

function build() {
  const rnd = mulberry(41);
  const spikes: Spikes = { blue: [], pale: [] };
  const twigs: string[] = [];
  const deepTwigs: string[] = [];
  const cores: { d: string; w: number; deep: number }[] = [];
  for (const r of rivers) {
    const p = rough(r.p, rnd, 0.26);
    cores.push({ d: line(p), w: r.w, deep: r.deep });
    let acc = 0;
    for (let i = 1; i < p.length; i++) {
      const [ax, ay] = p[i - 1];
      const [bx, by] = p[i];
      acc += Math.hypot(bx - ax, by - ay);
      const base = Math.atan2(by - ay, bx - ax);
      while (acc > r.step / 2) {
        acc -= r.step / 2;
        const s = rnd() < 0.5 ? -1 : 1;
        const a = base + s * (Math.PI / 2 + (rnd() - 0.5) * 1);
        const len = r.w * 0.5 + r.len * (0.25 + rnd() * rnd() * 1.2);
        spike(bx, by, a, len, 3.5 + r.w * 0.18, rnd, 1, spikes);
        if (r.deep > 1 && rnd() < 0.5) {
          const seg = (k: number) => line([[bx, by], [bx + Math.cos(a) * len * k, by + Math.sin(a) * len * k]]);
          twigs.push(seg(0.6));
          if (r.deep > 8) deepTwigs.push(seg(0.45));
        }
      }
    }
  }
  const pale: Spikes = { blue: [], pale: [] };
  const paleLines: string[] = [];
  for (const v of paleValleys) {
    const p = rough(v, rnd, 0.2);
    paleLines.push(line(p));
    for (let i = 1; i < p.length; i++) {
      const base = Math.atan2(p[i][1] - p[i - 1][1], p[i][0] - p[i - 1][0]);
      for (const s of [-1, 1]) spike(p[i][0], p[i][1], base + s * (0.6 + rnd() * 0.7), 14 + rnd() * 18, 3, rnd, 0, pale);
    }
  }
  const join = (ps: P[][], amp: number) => ps.map((p) => line(rough(p, rnd, amp))).join("");
  return {
    spikes: spikes.blue.join(""),
    halo: spikes.pale.join(""),
    twigs: twigs.join(""),
    deepTwigs: deepTwigs.join(""),
    cores,
    pale: paleLines.join(""),
    paleSpikes: pale.blue.join(""),
    white: join(thinWhite, 0.3),
    faint: join(faintWhite, 0.3),
    blue: join(thinBlue, 0.6),
  };
}

const T = build();

const lowland =
  "M0 340L45 368L62 400L78 445L92 500L110 540L130 590L150 640L180 650L205 700L245 745L262 800L270 880L290 930L300 985L303 1030L318 1080L325 1140L330 1190L338 1240L330 1300L325 1320L300 1270L240 1275L170 1295L165 1330L155 1395L120 1370L95 1335L90 1300L50 1290L30 1240L0 1200Z";
const lowlandSW = "M0 1400L60 1402L85 1400L110 1425L140 1450L165 1465L170 1500L190 1520L190 1600L0 1600Z";
const lowlandNW = "M0 0L195 0L188 60L180 88L130 95L95 108L70 130L66 160L0 158Z";
const basin =
  "M780 590L755 640L735 690L715 715L720 750L740 735L780 715L835 740L830 790L840 800L860 760L880 730L890 680L905 740L915 800L930 830L942 800L950 740L965 700L995 695L965 620L930 580L830 575Z";
const lake = "M2610 1432L2650 1445L2690 1430L2730 1440L2755 1490L2770 1560L2670 1560L2635 1500Z";

function Blob({ cx, cy, rx, ry, c, o = 1, r = 0 }: { cx: number; cy: number; rx: number; ry: number; c: string; o?: number; r?: number }) {
  return <ellipse cx={cx} cy={cy} rx={rx} ry={ry} fill={c} opacity={o} transform={`rotate(${r} ${cx} ${cy})`} />;
}

function Terrain() {
  return (
    <svg width="1000" height="512" viewBox="21 17 3000 1536" className="block shrink-0">
      <defs>
        <filter id="b60" x="-30%" y="-30%" width="160%" height="160%">
          <feGaussianBlur stdDeviation="45" />
        </filter>
        <filter id="b30" x="-30%" y="-30%" width="160%" height="160%">
          <feGaussianBlur stdDeviation="28" />
        </filter>
        <filter id="b20" x="-30%" y="-30%" width="160%" height="160%">
          <feTurbulence type="fractalNoise" baseFrequency="0.015" numOctaves="4" seed="5" result="n" />
          <feDisplacementMap in="SourceGraphic" in2="n" scale="50" xChannelSelector="R" yChannelSelector="G" result="d" />
          <feGaussianBlur in="d" stdDeviation="13" />
        </filter>
        <filter id="b6r" x="-5%" y="-5%" width="110%" height="110%">
          <feTurbulence type="fractalNoise" baseFrequency="0.04" numOctaves="3" seed="3" result="n" />
          <feDisplacementMap in="SourceGraphic" in2="n" scale="14" xChannelSelector="R" yChannelSelector="G" result="d" />
          <feGaussianBlur in="d" stdDeviation="4.500" />
        </filter>
        <filter id="rag" x="-5%" y="-5%" width="110%" height="110%">
          <feTurbulence type="fractalNoise" baseFrequency="0.05" numOctaves="3" seed="7" result="n" />
          <feDisplacementMap in="SourceGraphic" in2="n" scale="12" xChannelSelector="R" yChannelSelector="G" result="d" />
          <feGaussianBlur in="d" stdDeviation="2" />
        </filter>
        <filter id="ragEdge" x="-5%" y="-5%" width="110%" height="110%">
          <feTurbulence type="fractalNoise" baseFrequency="0.035" numOctaves="4" seed="9" result="n" />
          <feDisplacementMap in="SourceGraphic" in2="n" scale="40" xChannelSelector="R" yChannelSelector="G" result="d" />
          <feGaussianBlur in="d" stdDeviation="2" />
        </filter>
        <filter id="soft" x="-5%" y="-5%" width="110%" height="110%">
          <feGaussianBlur stdDeviation="2" />
        </filter>
        <filter id="soft6" x="-5%" y="-5%" width="110%" height="110%">
          <feGaussianBlur stdDeviation="5" />
        </filter>
        <filter id="grain" x="0" y="0" width="100%" height="100%">
          <feTurbulence type="fractalNoise" baseFrequency="0.005 0.003" numOctaves="5" seed="12" />
          <feColorMatrix values="0 0 0 0 .85  0 0 0 0 .32  0 0 0 0 .25  1.800 0 0 0 -.78" />
        </filter>
        <linearGradient id="low" x1="0" y1="340" x2="0" y2="1400" gradientUnits="userSpaceOnUse">
          <stop offset="0" stopColor="#a9c6fd" />
          <stop offset=".14" stopColor="#86a9fc" />
          <stop offset=".26" stopColor="#4c66d6" />
          <stop offset=".42" stopColor="#5a78e4" />
          <stop offset=".62" stopColor="#6f92f3" />
          <stop offset=".8" stopColor="#92b4fe" />
          <stop offset="1" stopColor="#b3cdfb" />
        </linearGradient>
        <linearGradient id="nw" x1="0" y1="17" x2="0" y2="160" gradientUnits="userSpaceOnUse">
          <stop offset="0" stopColor="#7b9ff9" />
          <stop offset="1" stopColor="#a6c4fe" />
        </linearGradient>
        <linearGradient id="sw" x1="0" y1="1400" x2="0" y2="1553" gradientUnits="userSpaceOnUse">
          <stop offset="0" stopColor="#93b5fe" />
          <stop offset=".5" stopColor="#6585ec" />
          <stop offset="1" stopColor="#5a78e4" />
        </linearGradient>
        <clipPath id="lowclip">
          <path d={lowland} />
        </clipPath>
      </defs>
      <rect x="0" y="0" width="3100" height="1600" fill="#f4987a" />
      <g filter="url(#b60)">
        <Blob cx={1250} cy={200} rx={300} ry={300} c="#ed8266" />
        <Blob cx={1100} cy={300} rx={90} ry={200} c="#e67059" r={-25} />
        <Blob cx={1750} cy={200} rx={260} ry={260} c="#f49a7b" />
        <Blob cx={2370} cy={170} rx={360} ry={190} c="#e8745c" r={8} />
        <Blob cx={2130} cy={430} rx={430} ry={110} c="#e67059" r={-12} />
        <Blob cx={600} cy={780} rx={220} ry={200} c="#ee8468" />
        <Blob cx={680} cy={420} rx={60} ry={230} c="#ea7a60" r={10} />
        <Blob cx={460} cy={1040} rx={100} ry={90} c="#e97761" />
        <Blob cx={1020} cy={980} rx={150} ry={180} c="#e5705a" />
        <Blob cx={1130} cy={1200} rx={270} ry={170} c="#ee8669" />
        <Blob cx={650} cy={1300} rx={190} ry={230} c="#f6a183" />
        <Blob cx={1400} cy={1430} rx={380} ry={130} c="#f7a889" />
        <Blob cx={1560} cy={1540} rx={120} ry={40} c="#f0cab5" />
        <Blob cx={250} cy={1520} rx={110} ry={60} c="#dd5f4b" />
        <Blob cx={2090} cy={1180} rx={230} ry={440} c="#da5644" r={8} />
        <Blob cx={2140} cy={1130} rx={110} ry={380} c="#c93a3a" r={9} />
        <Blob cx={2200} cy={820} rx={200} ry={190} c="#cc403a" r={20} />
        <Blob cx={2090} cy={1480} rx={110} ry={120} c="#d9533f" />
        <Blob cx={2440} cy={1120} rx={110} ry={330} c="#f6a283" />
        <Blob cx={2370} cy={1330} rx={90} ry={160} c="#f6a385" r={-10} />
        <Blob cx={2700} cy={900} rx={180} ry={300} c="#f39475" />
        <Blob cx={2930} cy={1250} rx={100} ry={380} c="#ee8367" r={15} />
        <Blob cx={2560} cy={400} rx={110} ry={80} c="#ec7d62" />
        <Blob cx={2870} cy={70} rx={140} ry={120} c="#f6a588" />
        <Blob cx={2850} cy={560} rx={180} ry={150} c="#f59f80" />
        <Blob cx={1880} cy={1060} rx={110} ry={60} c="#e5705a" />
      </g>
      <rect x="21" y="17" width="3000" height="1536" filter="url(#grain)" opacity=".3" />
      <g filter="url(#b30)">
        <path d="M960 17L1170 17L1120 210L1010 240L960 160Z" fill="#ef896c" opacity=".6" />
        <path d="M990 180L1060 180L1150 420L1170 620L1100 560L1060 330Z" fill="#df6651" opacity=".75" />
        <path d="M900 150L960 220L1040 330L1060 440L1060 540L960 460L920 330Z" fill="#e5705a" opacity=".7" />
        <path d="M2380 270L2560 280L2680 320L2810 250L2800 190L2700 110L2450 180Z" fill="#e0654f" opacity=".6" />
        <path d="M3060 -40L3060 700L2990 580L2950 410L2890 340L2830 300L2910 200L2910 120Z" fill="#f0cbb6" />
        <path d="M3060 60L3060 500L3005 440L2960 300L3000 180Z" fill="#e0dbd8" />
        <path d="M2190 640L2290 610L2390 600L2400 700L2340 830L2280 900L2240 950L2150 900Z" fill="#c32b38" opacity=".75" />
        <Blob cx={2145} cy={1040} rx={30} ry={170} c="#bb152b" r={8} o={0.75} />
        <Blob cx={2060} cy={850} rx={60} ry={60} c="#cf463d" o={0.6} />
        <Blob cx={1880} cy={830} rx={30} ry={60} c="#d6523f" o={0.7} r={-30} />
        <Blob cx={2232} cy={890} rx={60} ry={34} c="#b40426" r={-20} />
      </g>
      <g filter="url(#b20)">
        <path d="M890 1260L925 1300L925 1400L885 1580L710 1580L720 1480L800 1360Z" fill="#eed0be" />
        <path d="M875 1340L890 1380L860 1580L780 1580Z" fill="#e4dad3" />
        <path d="M2500 1290L2560 1340L2640 1375L2720 1390L2770 1480L2790 1580L2650 1580L2590 1460L2520 1370Z" fill="#eecdbb" />
        <path d="M2270 1580L2320 1500L2400 1460L2490 1400L2560 1450L2650 1580Z" fill="#df634e" opacity=".85" />
        <Blob cx={2240} cy={895} rx={36} ry={20} c="#b40426" r={-20} o={0.7} />
        <Blob cx={1050} cy={1015} rx={28} ry={13} c="#cb3e3b" r={-30} o={0.85} />
        <Blob cx={985} cy={945} rx={42} ry={14} c="#d04a3f" r={-30} o={0.75} />
        <Blob cx={625} cy={1010} rx={42} ry={16} c="#dc5f4b" r={-20} o={0.8} />
        <Blob cx={1020} cy={1100} rx={18} ry={20} c="#dc5f4b" o={0.8} />
        <Blob cx={1015} cy={815} rx={18} ry={56} c="#dc5f4b" o={0.8} />
        <Blob cx={675} cy={850} rx={15} ry={18} c="#de624d" o={0.8} />
        <Blob cx={315} cy={705} rx={22} ry={26} c="#dd604b" o={0.8} />
        <Blob cx={50} cy={240} rx={28} ry={46} c="#e26952" o={0.8} />
        <Blob cx={50} cy={1345} rx={28} ry={44} c="#df644e" />
        <path d="M240 600L330 610L310 670L270 700L330 800L360 880L360 960L340 1020L350 1140L320 1160L280 850L200 700Z" fill="#f1c8b2" />
        <path d="M300 860L430 870L340 890Z" fill="#f3c6af" />
        <path d="M1060 760L1115 775L1135 880L1090 870Z" fill="#f3c3ab" />
        <path d="M20 335L60 295L110 300L60 375Z" fill="#f1cbb6" />
        <path d="M170 1290L300 1265L310 1330L340 1370L430 1310L420 1380L360 1450L230 1410L180 1380Z" fill="#ecd2c3" />
        <path d="M250 1340L320 1350L340 1410L290 1400Z" fill="#ed8468" />
        <path d="M90 1410L180 1410L260 1500L250 1580L200 1560Z" fill="#e9775f" />
        <path d="M540 80L580 160L540 230L500 190Z" fill="#f3bfa6" />
        <path d="M420 330L480 340L520 440L470 460L420 420Z" fill="#f4bfa5" />
        <Blob cx={600} cy={45} rx={120} ry={16} c="#f3bfa6" />
        <Blob cx={1760} cy={1045} rx={60} ry={30} c="#e7765d" o={0.7} />
        <path d="M630 210L710 200L730 330L700 420L640 420Z" fill="#e97761" />
        <path d="M850 440L900 430L920 500L870 520Z" fill="#e26952" />
      </g>
      <g filter="url(#soft6)" fill="none" stroke="#f6ae90" strokeWidth="9" opacity=".65">
        <path d="M930 160L985 240L1035 320L1045 430L1080 500L1075 560L1110 640" />
        <path d="M3000 720L2900 850L2860 980L2800 1140L2720 1270L2730 1400" opacity=".7" />
        <path d="M850 1100L845 1160L860 1230L900 1270" opacity=".5" />
      </g>
      <g filter="url(#ragEdge)" stroke="#f1cdb8" strokeWidth="34" fill="#f1cdb8" strokeLinejoin="round">
        <path d={lowland} />
        <path d={lowlandSW} />
        <path d={lowlandNW} />
      </g>
      <g filter="url(#b6r)" stroke="#f2c9b3" strokeWidth="18" fill="#f2c9b3" strokeLinejoin="round">
        <path d={basin} strokeWidth="24" />
        <path d={T.paleSpikes} strokeWidth="3" opacity=".75" />
        <path d={T.pale} fill="none" strokeWidth="8" strokeLinecap="round" opacity=".8" />
        <path d={T.halo} strokeWidth="11" />
      </g>
      <g filter="url(#soft)" fill="none" strokeLinejoin="round" strokeLinecap="round">
        <path d={T.white} stroke="#f2cbb6" strokeWidth="6" />
        <path d={T.faint} stroke="#f5b79c" strokeWidth="5" opacity=".5" />
        <path d="M2862 315L2900 305L2950 275" stroke="#e6d7cf" strokeWidth="14" />
      </g>
      <g filter="url(#ragEdge)">
        <g stroke="#e0e0e6" strokeWidth="9" fill="#e0e0e6">
          <path d={lowland} />
          <path d={lowlandSW} />
          <path d={lowlandNW} />
        </g>
        <path d={lowland} fill="url(#low)" />
        <path d={lowlandSW} fill="url(#sw)" />
        <path d={lowlandNW} fill="url(#nw)" />
      </g>
      <g filter="url(#rag)" strokeLinejoin="round" strokeLinecap="round">
        <g stroke="#dfe0e7" strokeWidth="9" fill="#dfe0e7">
          <path d={basin} />
          <path d={lake} strokeWidth="10" />
          <path d={T.blue} fill="none" strokeWidth="11" />
          {T.cores.map((c, i) => (
            <path key={i} d={c.d} fill="none" strokeWidth={c.w + 7} />
          ))}
          <path d={T.spikes} strokeWidth="6" />
        </g>
        <path d={basin} fill="#a9c6fd" />
        <path d={lake} fill="#a3c2fe" />
        <path d={T.spikes} fill="#a3c2fe" stroke="#a3c2fe" strokeWidth=".8" />
        <path d={T.blue} fill="none" stroke="#93b5fe" strokeWidth="6" />
        {T.cores.map((c, i) => (
          <path key={i} d={c.d} fill="none" stroke={c.deep > 8 ? "#84a7fc" : c.deep > 2 ? "#94b6ff" : "#a6c4fe"} strokeWidth={c.w} />
        ))}
        <path d={T.twigs} fill="none" stroke="#7396f5" strokeWidth="3.500" opacity=".65" />
        <path d={T.deepTwigs} fill="none" stroke="#506bda" strokeWidth="5.500" opacity=".75" />
        {T.cores.map((c, i) => c.deep > 1 && <path key={i} d={c.d} fill="none" stroke="#6788ee" strokeWidth={c.deep * 1.400} opacity=".75" />)}
        {T.cores.map((c, i) => c.deep > 4 && <path key={i} d={c.d} fill="none" stroke="#4358cb" strokeWidth={c.deep * 0.65} opacity={c.deep > 8 ? 0.95 : 0.75} />)}
        <path d={line(canyonWest.slice(0, 19))} fill="none" stroke="#4055c8" strokeWidth="10" opacity=".7" />
        <path d="M830 590L790 640L740 700M790 650L860 690L880 730M940 600L960 660L920 660M800 640L830 690" fill="none" stroke="#7ea1fa" strokeWidth="3.500" />
      </g>
      <g clipPath="url(#lowclip)">
        <g filter="url(#b30)">
          <Blob cx={100} cy={650} rx={80} ry={60} c="#3b4cc0" />
          <Blob cx={60} cy={800} rx={45} ry={180} c="#4459cc" r={-12} />
          <Blob cx={220} cy={820} rx={50} ry={110} c="#6788ee" r={-10} />
          <Blob cx={35} cy={450} rx={30} ry={90} c="#94b6ff" />
          <Blob cx={50} cy={1130} rx={50} ry={110} c="#9dbdff" o={0.7} />
        </g>
        <g filter="url(#soft6)" fill="none" strokeWidth="6" opacity=".6">
          <path d="M60 760L75 880L120 970L160 1010L175 1100L165 1200L180 1300M60 960L50 1050M120 970L150 1060" stroke="#5673e0" />
          <path d="M165 1000L210 1090L260 1130M170 1160L100 1220M180 1250L230 1280" stroke="#7c9ff9" />
          <path d="M21 700L60 740L100 800M75 1000L85 1140" stroke="#8db0fe" strokeWidth="10" />
        </g>
      </g>
      <g filter="url(#soft)">
        <path d="M855 655L885 660L892 690L870 672Z" fill="#ead5c8" />
        <path d="M888 690L898 720L900 780L884 750L880 720Z" fill="#f2b59b" />
        <circle cx="895" cy="631" r="8" fill="#f1cdb8" />
        <circle cx="105" cy="1276" r="10" fill="#dcdde2" />
      </g>
      <path d="M1717 703L1745 708L1751 732L1748 742L1726 733Z" fill="#33241f" stroke="#f0d9cd" strokeWidth="3" />
      <path d="M1738 735L1748 743" stroke="#33241f" strokeWidth="8" />
    </svg>
  );
}

/* ---------- left dock ---------- */

const PanelBtn = ({ w, dim = false, children }: Kids & { w: string; dim?: boolean }) => (
  <div className={`flex h-full items-center justify-center gap-[4px] ${BTN} ${w} ${dim ? "text-[#707070]" : ""}`}>{children}</div>
);

const Minus = () => <div className="h-[5px] w-[13px] border border-[#12204e] bg-[#8496de]" />;

const GroupHead = ({ children }: Kids) => (
  <div className="mx-[9px] flex h-[28px] items-center gap-2 rounded-[2px] border border-[#262626] bg-[#2b2b2b] pl-[11px]">
    <Minus />
    <span className="leading-none tracking-[-0.15px]">{children}</span>
  </div>
);

const Head = ({ children, className = "" }: Kids & { className?: string }) => (
  <div className={`mx-[9px] flex items-center border-b border-[#4a4a4a] text-[12.7px] font-bold leading-none shadow-[inset_0_-1px_0_#1b1b1b] ${className}`}>{children}</div>
);

const Slider = ({ end = false }: { end?: boolean }) => (
  <div className={`relative flex h-[16px] w-[124px] shrink-0 items-center ${end ? "justify-end" : "justify-start"}`}>
    <div className="absolute left-0 h-[4px] w-full rounded-full border border-[#1a1a1a] bg-[#3b3b3b]" />
    <svg width="11" height="15" viewBox="0 0 11 15" className="relative">
      <path d="M1 1h9v9l-4.500 4L1 10z" fill="#474747" stroke="#161616" />
      <path d="M2 9.500V2h7" fill="none" stroke="#a5a5a5" />
    </svg>
  </div>
);

function LeftDock() {
  return (
    <div className="flex w-[373px] shrink-0 flex-col overflow-hidden [&>*]:shrink-0">
      <DockTitle title="Pipeline Browser" side="w-[115px]" />
      <div className="ml-[1px] mt-px flex h-[145px] w-[371px] flex-col border-2 border-[#282828] bg-[#1e1e1e] pt-[2px]">
        <div className="flex h-[23px] items-center pl-[29px]">
          <svg width="8" height="20" viewBox="0 0 8 20">
            <path d="M4 0v5" stroke="#8a8a8a" />
            <rect x="1" y="6" width="6" height="12" fill="#b9b9b9" />
            <path d="M2 8h4M2 10.500h4" stroke="#222" strokeWidth="1.200" />
          </svg>
          <span className="ml-[7px] leading-none">builtin:</span>
        </div>
        <div className="flex h-[20px] items-center pl-[5px]">
          <svg width="11" height="8" viewBox="0 0 11 8" className="mt-[2px]">
            <ellipse cx="5.500" cy="4" rx="5.300" ry="3.300" fill="#cdd9ec" />
            <circle cx="5.500" cy="4" r="2.700" fill="#13204a" />
          </svg>
          <div className="ml-[8px] flex h-[18px] w-[84px] items-center border border-dotted border-[#d9d9d9] bg-[#164474] text-white">
            <svg width="16" height="16" viewBox="0 0 16 16">
              <path d="M1 3l5 1v10l-5-2z" fill="#2f5a30" />
              <path d="M5 3.500 15 2v11L6 14z" fill="#5f9f4a" />
              <path d="M1 3 9 1l6 1-9 2z" fill="#437a3a" />
            </svg>
            <span className="ml-[3px] leading-none tracking-[-0.1px]">output.vti</span>
          </div>
        </div>
      </div>
      <Dots className="ml-[125px] mt-[2px] h-[5px] w-[119px]" />
      <DockTitle title="Properties" side="w-[131px]" className="-mt-[2px]" />
      <div className="mx-[9px] mt-[10px] flex h-[26px] justify-between">
        <PanelBtn w="w-[87px]" dim>
          <Ico s={16}>
            <path d="M2 9l8-3 6 3v10l-6 4-8-4z" fill="#8f8f8f" />
            <path d="M2 9l8 3v11M10 12l6-3" fill="none" stroke="#555" />
            <path d="M11 10l6-5-3-3h9v9l-3-3-6 5z" fill="#a9a9a9" />
          </Ico>
          <span>
            <u>A</u>pply
          </span>
        </PanelBtn>
        <PanelBtn w="w-[87px]" dim>
          <Ico s={16}>
            <circle cx="12" cy="12" r="9" fill="none" stroke="#8b8b8b" strokeWidth="4" />
            <path d="M6 18 18 6" stroke="#8b8b8b" strokeWidth="4" />
          </Ico>
          <span>
            <u>R</u>eset
          </span>
        </PanelBtn>
        <PanelBtn w="w-[87px]">
          <Ico s={14}>
            <path d="M3 3l18 18M21 3 3 21" stroke="#e2583c" strokeWidth="6" />
          </Ico>
          <span>
            <u>D</u>elete
          </span>
        </PanelBtn>
        <PanelBtn w="w-[86px]">
          <Question s={16} />
        </PanelBtn>
      </div>
      <div className="mx-[9px] mt-[9px] flex h-[24px] items-center justify-between">
        <div className={`flex h-[20px] w-[326px] items-center pl-1 text-[12.7px] leading-none text-[#858585] ${FIELD}`}>Search ... (use Esc to clear text)</div>
        <div className={`flex h-[24px] w-[25px] items-center justify-center ${BTN}`}>
          <Ico s={16}>
            <circle cx="12" cy="12" r="5.800" fill="none" stroke="#f2f2f2" strokeWidth="5" />
            <path d="M12 .5v5M12 18.500v5M.5 12h5M18.500 12h5M3.900 3.900l3.500 3.500M16.600 16.600l3.500 3.500M20.100 3.900l-3.500 3.500M7.400 16.600l-3.500 3.500" stroke="#f2f2f2" strokeWidth="4" />
          </Ico>
        </div>
      </div>
      <div className="h-[8px]" />
      <GroupHead>Properties (output.vti)</GroupHead>
      <div className="mx-[9px] mt-[7px] h-[65px] border-2 border-[#272727] bg-[#1e1e1e]">
        <div className="mx-[1px] flex h-[22px] items-center gap-[3px] bg-gradient-to-b from-[#474645] to-[#3a3938] pl-[3px] leading-none tracking-[-0.05px]">
          <CheckX />
          Cell/Point Array Status
        </div>
        <div className="flex h-[18px] items-center pl-[3px] leading-none">
          <CheckX />
          <svg width="16" height="16" viewBox="0 0 16 16" className="ml-[6px] mr-[7px]">
            {([[3, 3], [11, 5], [4, 9], [13, 13]] as P[]).map(([x, y]) => (
              <circle key={`${x}${y}`} cx={x} cy={y} r="2.500" fill="#e6c345" />
            ))}
          </svg>
          Scalars_
        </div>
      </div>
      <div className="h-[6px]" />
      <GroupHead>Display (UniformGridRepresentation)</GroupHead>
      <div className="mx-[9px] mt-[6px] flex h-[21px] items-start">
        <span className="w-[100px] shrink-0 text-[12.7px] leading-[14px]">Representation</span>
        <Combo className="h-[20px] w-[255px]">Slice</Combo>
      </div>
      <Head className="mt-[5px] h-[18px]">Coloring</Head>
      <div className="mx-[9px] mt-[5px] flex h-[21px] items-center justify-between">
        <Combo className="h-[21px] w-[176px]">
          <div className="ml-[5px] mr-[7px]">
            <PointDot />
          </div>
          Scalars_
        </Combo>
        <Combo className="h-[20px] w-[174px]" />
      </div>
      <div className="mx-[9px] mt-[6px] flex h-[25px] justify-between">
        <PanelBtn w="w-[116px]">
          <ColorMap s={15} id="cm2" />
          Show
        </PanelBtn>
        <PanelBtn w="w-[114px]">
          <EditMap s={15} id="em2" />
          Edit
        </PanelBtn>
        <PanelBtn w="w-[115px]">
          <Range s={15} />
          Rescale
        </PanelBtn>
      </div>
      <Head className="mt-[6px] h-[18px]">Styling</Head>
      <div className="mx-[9px] mt-[5px] flex h-[20px] items-start">
        <span className="w-[100px] shrink-0 leading-[14px]">Opacity</span>
        <div className="mt-[1px]">
          <Slider end />
        </div>
        <div className={`ml-[7px] flex h-[20px] flex-1 items-center pl-1 leading-none ${FIELD}`}>1</div>
      </div>
      <Head className="mt-[6px] h-[18px]">Cube Axes</Head>
      <div className="mx-[9px] mt-[5px] flex h-[24px] items-center justify-between">
        <div className="flex items-center gap-[6px] leading-none">
          <div className="h-[12px] w-[12px] bg-[#1c1c1c]" />
          Show Axis
        </div>
        <PanelBtn w="w-[174px]" dim>
          Edit
        </PanelBtn>
      </div>
      <Head className="mt-[5px] h-[19px]">Slicing</Head>
      <div className="mx-[9px] mt-[5px] flex h-[20px] items-start">
        <span className="w-[100px] shrink-0 leading-[14px]">Slice Direction</span>
        <Combo className="h-[20px] w-[255px]">XY Plane</Combo>
      </div>
      <div className="mx-[9px] mt-[4px] flex h-[20px] items-start">
        <span className="w-[100px] shrink-0 leading-[14px]">Slice</span>
        <div className="mt-[1px]">
          <Slider />
        </div>
        <div className={`ml-[7px] flex h-[20px] flex-1 items-center pl-1 leading-none ${FIELD}`}>0</div>
      </div>
      <Dots className="ml-[125px] mt-[62px] h-[5px] w-[119px]" />
      <DockTitle title="Information" side="w-[127px]" className="-mt-px" />
      <div className="ml-[1px] mt-px flex h-[223px] w-[371px] border border-[#252525]">
        <div className="flex min-w-0 flex-1 flex-col overflow-hidden pl-[10px] pr-[9px] pt-[9px] [&>*]:shrink-0">
          <fieldset className="h-[63px] rounded-[2px] border border-[#242424] px-[4px]">
            <legend className="ml-[1px] px-[4px] leading-[16px]">Properties</legend>
            <div className="mt-[2px] flex h-[20px] items-center leading-none">
              <span className="w-[66px]">Filename:</span>output.vti
            </div>
            <div className="flex h-[20px] items-center leading-none">
              <span className="w-[62px] shrink-0">Path:</span>
              <span className="flex h-[18px] w-[258px] items-center justify-end overflow-hidden whitespace-nowrap text-[12.450px]">on/convertedData/data/scalarFields/2-grid</span>
            </div>
          </fieldset>
          <fieldset className="mt-[5px] h-[122px] rounded-[2px] border border-[#242424] px-[9px]">
            <legend className="-ml-[4px] px-[4px] leading-[16px]">Statistics</legend>
            <div className="flex h-[23px] items-center pt-[13px] leading-none">
              <span className="w-[59px]">Type:</span>
              <span className="tracking-[-0.2px]">Image (Uniform Rectilinear Grid)</span>
            </div>
            <div className="flex h-[23px] items-center pt-[13px] leading-none">
              <span className="w-[120px]">Number of Cells:</span>8388608
            </div>
            <div className="flex h-[23px] items-center pt-[13px] leading-none">
              <span className="w-[120px]">Number of Points:</span>8394753
            </div>
            <div className="flex h-[23px] items-center pt-[13px] leading-none">
              <span className="w-[59px]">Memory:</span>66 MB
            </div>
          </fieldset>
          <fieldset className="mt-[5px] h-[60px] rounded-[2px] border border-[#242424] px-[9px]">
            <legend className="-ml-[4px] px-[4px] leading-[16px]">Data Arrays</legend>
          </fieldset>
        </div>
        <div className="mr-[1px] flex w-[16px] flex-col pb-[1px] pt-[1px]">
          <ScrollBtn up />
          <div className="flex h-[66px] items-center justify-center border border-[#222] bg-gradient-to-r from-[#474645] to-[#3c3b3a]">
            <div className="h-[20px] w-[11px] bg-[radial-gradient(circle,#222_0.9px,transparent_1.1px)] bg-[length:4px_4px]" />
          </div>
          <Track className="flex-1" />
          <ScrollBtn up />
          <div className="h-[1px]" />
          <ScrollBtn />
        </div>
      </div>
    </div>
  );
}

/* ---------- table ---------- */

const values = [102, 102, 102, 102, 102, 102, 102, 102, 102, 102, 102, 101, 101, 101, 101, 101, 101, 101, 100, 100, 100, 100, 100, 99, 99, 99, 99, 99, 99, 98];

function SpreadSheet() {
  return (
    <div className="ml-[2px] mt-[3px] flex h-[916px] w-[524px] border border-[#252525] bg-[#1e1e1e] p-[1px] text-[12.7px]">
      <div className="flex flex-1 flex-col overflow-hidden">
        <div className="flex h-[21px] shrink-0 bg-[#2e2e2e] leading-none">
          <div className="w-[63px] border-r border-[#1c1c1c] bg-[#333231]" />
          {["Point ID", "ctured Coordin", "Scalars_"].map((h) => (
            <div key={h} className="flex w-[100px] items-center justify-center whitespace-nowrap border-r-2 border-[#1c1c1c] bg-gradient-to-b from-[#454443] to-[#3a3938] text-[12.500px]">
              {h}
            </div>
          ))}
        </div>
        {values.map((v, i) => (
          <div key={i} className="flex h-[30px] shrink-0 leading-none">
            <div className="flex w-[63px] items-center border-b-2 border-r border-[#1a1a1a] bg-gradient-to-r from-[#3c3b3a] to-[#42413f] pl-[3px] pt-[2px]">{7047164 + i}</div>
            {[String(7047164 + i), `${324 + i}  17200`, String(v)].map((t, j) => (
              <div key={j} className={`flex w-[100px] items-center whitespace-pre border-b border-r border-[#2b2b2b] pl-[3px] ${i % 2 ? "bg-[#222222]" : "bg-[#1d1d1d]"}`}>
                {t}
              </div>
            ))}
          </div>
        ))}
      </div>
      <div className="-mt-px flex w-[15px] shrink-0 flex-col">
        <ScrollBtn up />
        <Track className="h-[707px]" />
        <div className="h-[24px] border border-[#222] bg-[#454443]" />
        <Track className="flex-1" />
        <ScrollBtn up />
        <div className="h-[1px]" />
        <ScrollBtn />
      </div>
    </div>
  );
}

/* ---------- app ---------- */

const menus = ["File", "Edit", "View", "Sources", "Filters", "Tools", "Macros", "Help"];
const menuW = ["w-[35px]", "w-[39px]", "w-[43px]", "w-[66px]", "w-[52px]", "w-[46px]", "w-[60px]", "w-[40px]"];
const BAR = "flex shrink-0 items-center border-b border-[#232323] shadow-[inset_0_1px_0_#343434]";

export default function App() {
  return (
    <div className="flex h-[1176px] w-[1920px] flex-col overflow-hidden bg-[#2e2e2e] font-['DejaVu_Sans','Noto_Sans',sans-serif] text-[12.55px] text-[#dcdcdc]">
      {/* title bar */}
      <div className="grid h-[19px] shrink-0 grid-cols-[1fr_auto_1fr] items-center">
        <div className="flex items-center gap-[9px] pl-[3px]">
          <svg width="14" height="10" viewBox="0 0 14 10">
            <path d="M3 0h2.500L3 10H0z" fill="#e01c1c" />
            <path d="M7.500 0H10L7 10H4.500z" fill="#25b325" />
            <path d="M11.500 0H14l-3 10H8.500z" fill="#2148dd" />
          </svg>
          <div className="flex h-[13px] w-[13px] items-center justify-center rounded-full bg-[#4b4b4b]">
            <div className="h-[3px] w-px bg-[#999]" />
          </div>
        </div>
        <div className="font-['DejaVu_Sans_Condensed','DejaVu_Sans'] text-[10px] font-bold leading-none tracking-[-0.25px] text-[#ececec]">ParaView 4.1.0 64-bit</div>
        <div className="flex justify-end gap-[10px] pr-[4px]">
          {["M4 5.500l3 3 3-3", "M7 4.500l2.500 2.500L7 9.500 4.500 7z", "M4.300 4.300l5.400 5.400M9.700 4.300L4.300 9.700"].map((d) => (
            <svg key={d} width="13" height="13" viewBox="0 0 14 14">
              <circle cx="7" cy="7" r="6.800" fill="#4c4c4c" />
              <path d={d} fill="none" stroke="#f0f0f0" strokeWidth="1.800" />
            </svg>
          ))}
        </div>
      </div>
      {/* menu bar */}
      <div className="flex h-[25px] shrink-0 items-center border-b border-[#232323] pl-[10px] pt-px">
        {menus.map((m, i) => (
          <div key={m} className={`leading-[14px] ${menuW[i]}`}>
            <span className="underline underline-offset-2">{m[0]}</span>
            {m.slice(1)}
          </div>
        ))}
      </div>
      {/* main toolbar */}
      <div className={`h-[37px] ${BAR}`}>
        <Handle className="ml-[6px]" />
        <Cell><Folder /></Cell>
        <Cell><Folder save /></Cell>
        <Sep />
        <Cell><Servers /></Cell>
        <Cell><Servers off /></Cell>
        <Sep />
        <Cell><Undo /></Cell>
        <Cell><Undo redo /></Cell>
        <Sep />
        <Cell><Magic /></Cell>
        <Sep />
        <Cell><Question /></Cell>
        <Cell><Legend /></Cell>
        <Handle className="ml-[9px]" />
        <Cell><Play d="M4 5h3v14H4zM20 5v14L8 12z" /></Cell>
        <Cell><Play d="M18 5h3v14h-3zM15 5v14L3 12z" /></Cell>
        <Cell><Play d="M7 5.500v13L18 12z" /></Cell>
        <Cell><Play d="M3 5h4v14H3zM9 5v14l12-7z" /></Cell>
        <Cell><Play d="M17 5h3v14h-3zM4 5v14l12-7z" /></Cell>
        <Cell><Loop /></Cell>
        <Handle className="ml-[10px] -mr-px" />
        <span className="w-[38px] text-[12.4px] leading-none">Time:</span>
        <div className={`flex h-[20px] w-[108px] items-center pl-1 leading-none ${FIELD}`}>0</div>
        <div className={`ml-[2px] flex h-[18px] w-[37px] items-center pl-1 leading-none text-[#666] ${FIELD}`}>0</div>
        <div className="flex h-[18px] w-[16px] flex-col">
          <div className={`flex flex-1 items-center justify-center ${BTN}`}><Arrow up dim /></div>
          <div className={`flex flex-1 items-center justify-center ${BTN}`}><Arrow dim /></div>
        </div>
      </div>
      {/* colouring / camera toolbar */}
      <div className={`h-[37px] ${BAR}`}>
        <Handle className="ml-[6px]" />
        <Cell><ColorMap id="cm1" /></Cell>
        <Cell><EditMap id="em1" /></Cell>
        <Cell><Range /></Cell>
        <Combo className="h-[21px] w-[149px]">
          <div className="ml-[5px] mr-[7px]">
            <PointDot />
          </div>
          Scalars_
        </Combo>
        <Combo className="ml-[5px] h-[20px] w-[71px]" />
        <Handle className="ml-[11px]" />
        <Combo className="-ml-px h-[20px] w-[149px]">Slice</Combo>
        <Handle className="ml-[11px] -mr-px" />
        <Cell><ResetCam /></Cell>
        <Cell><ZoomBox d /></Cell>
        <Cell><ZoomBox /></Cell>
        <Cell><Axis up="#7fbb5d" side="#dfb545" box="#e8401c" label="+X" /></Cell>
        <Cell><Axis flip up="#7fbb5d" side="#dfb545" box="#e8401c" label="-X" /></Cell>
        <Cell><Axis flip up="#7fbb5d" side="#de6e55" box="#efc023" label="+Y" /></Cell>
        <Cell><Axis up="#7fbb5d" side="#de6e55" box="#efc023" label="-Y" /></Cell>
        <Cell><Axis up="#dfb545" side="#de6e55" box="#85ba45" label="+Z" /></Cell>
        <Cell><Axis flip up="#dfb545" side="#de6e55" box="#85ba45" label="-Z" /></Cell>
        <Handle className="ml-[9px]" />
        <Cell><CenterAxes /></Cell>
        <Cell><Rotate kind="show" /></Cell>
        <Cell><Rotate kind="center" /></Cell>
        <Cell><Rotate kind="pick" /></Cell>
        <Handle className="ml-[10px]" />
      </div>
      {/* filter toolbar */}
      <div className={`h-[36px] ${BAR}`}>
        <Handle className="ml-[6px] -mr-px" />
        {[
          <Calc />, <Contour />, <Cube />, <Cube kind="slice" />, <Cube kind="extract" />, <Cube kind="glass" line="#9db7c4" />,
          <Glyph />, <Stream />, <Warp />, <Group on />, <Group />,
        ].map((ic, i) => (
          <Cell key={i} w="w-[33px]">{ic}</Cell>
        ))}
        <Handle className="ml-[10px] -mr-[2px]" />
        {[<Extract />, <Plot kind="gold" />, <PlotLine />, <Plot kind="sel" />, <Cube kind="solid" line="#8a97a5" />].map((ic, i) => (
          <Cell key={i} w="w-[33px]">{ic}</Cell>
        ))}
      </div>
      {/* work area */}
      <div className="flex h-[994px] shrink-0">
        <LeftDock />
        <div className="flex w-[6px] shrink-0 items-center justify-center">
          <div className="mb-[2px] h-[330px] w-[2px] bg-[radial-gradient(circle,#525252_0.9px,transparent_1.1px)] bg-[length:2px_4px]" />
        </div>
        <div className="flex flex-1 flex-col">
          <div className="flex h-[22px] shrink-0 items-end border-b border-[#262626]">
            <div className="-mb-px flex h-[20px] w-[100px] items-center rounded-t-[3px] border border-b-0 border-[#262626] bg-[#2e2e2e] pl-[11px] leading-none">
              <span className="tracking-[-0.3px]">Layout #1</span>
              <svg width="8" height="8" viewBox="0 0 8 8" className="ml-[5px]" stroke="#000" strokeWidth="1.800">
                <path d="M.5.5l7 7M7.500.5l-7 7" />
              </svg>
            </div>
            <div className="ml-px flex h-[16px] w-[32px] items-center justify-center bg-[#3a3938] pt-px leading-none">+</div>
          </div>
          <div className="flex h-[972px]">
            {/* render view */}
            <div className="flex w-[1007px] shrink-0 flex-col pl-[1px]">
              <div className="flex h-[21px] shrink-0 items-center pl-px pt-[2px]">
                <Cell w="w-[30px]"><Picture kind="undo" /></Cell>
                <Cell w="w-[22px]"><Picture kind="redo" /></Cell>
                <span className="w-[36px] pl-[2px] text-center leading-none">2D</span>
                {["find", "selg", "selr", "frust", "tabler", "tri", "rdots", "wdots", "sheet"].map((k) => (
                  <Cell key={k} w="w-[26px]"><Picture kind={k} s={15} /></Cell>
                ))}
                <div className="flex-1" />
                <div className="mr-[4px]"><ViewButtons /></div>
              </div>
              <div className="flex h-[951px] w-[1006px] flex-col border-[3px] border-[#0c0cac] pt-[216px]">
                <Terrain />
              </div>
            </div>
            <div className="flex w-[3px] shrink-0 items-center justify-center">
              <div className="h-[330px] w-[2px] bg-[radial-gradient(circle,#484848_0.9px,transparent_1.1px)] bg-[length:2px_4px]" />
            </div>
            {/* spreadsheet view */}
            <div className="flex w-[527px] flex-col">
              <div className="flex h-[21px] shrink-0 items-center justify-between pl-[7px] pr-px pt-[2px]">
                <Picture kind="sheetoff" s={14} />
                <ViewButtons />
              </div>
              <div className="flex h-[27px] shrink-0 items-center whitespace-nowrap pl-px pt-px leading-none">
                <b className="w-[67px]">Showing</b>
                <Combo className="h-[20px] w-[87px]"><span className="tracking-[-0.1px]">output.vti</span></Combo>
                <b className="w-[72px] pl-px">Attribute:</b>
                <Combo className="h-[20px] w-[93px]"><span className="-ml-px tracking-[-0.1px]">Point Data</span></Combo>
                <b className="w-[73px] pl-[2px] tracking-[-0.1px]">Precision:</b>
                <div className={`flex h-[20px] w-[37px] items-center justify-end pr-[5px] ${FIELD}`}>6</div>
                <div className="flex h-[20px] w-[15px] flex-col">
                  <div className={`flex flex-1 items-center justify-center ${BTN}`}><Arrow up /></div>
                  <div className={`flex flex-1 items-center justify-center ${BTN}`}><Arrow /></div>
                </div>
                <div className="ml-[3px] flex gap-[2px]">
                  <div className="flex h-6 w-[25px] items-center justify-center rounded-[2px] border border-[#3b3b3b] bg-[#292929]">
                    <Ico s={17}>
                      <rect x="3" y="3" width="15" height="16" fill="none" stroke="#587552" strokeWidth="2" strokeDasharray="3 2" />
                      <path d="M11 9l10 5-4 2 4 6-2 1-4-6-3 3z" fill="#55604f" />
                    </Ico>
                  </div>
                  <div className="flex h-6 w-[25px] items-center justify-center rounded-[2px] border border-[#3b3b3b] bg-[#242424]">
                    <Ico s={15}>
                      <rect x="1" y="1" width="22" height="22" fill="#f9ee9a" stroke="#e3c63a" strokeWidth="2" />
                      <path d="M1 7h22M1 12.500h22M1 18h22M8.500 1v22M15.500 1v22" stroke="#dfbf38" strokeWidth="1.800" />
                    </Ico>
                  </div>
                  <div className="flex h-6 w-[25px] items-center justify-center rounded-[2px] border border-[#3b3b3b] bg-[#292929]">
                    <Ico s={18}>
                      <path d="M7 3C3 3 5 7 4 10l-2 2 2 2c1 3-1 7 3 7M17 3c4 0 2 4 3 7l2 2-2 2c-1 3 1 7-3 7" fill="none" stroke="#676767" strokeWidth="1.500" />
                      <path d="M7 17h10" stroke="#3f5f7d" strokeWidth="2.500" strokeDasharray="2.500 1.500" />
                    </Ico>
                  </div>
                </div>
              </div>
              <SpreadSheet />
            </div>
          </div>
        </div>
      </div>
      {/* status bar */}
      <div className="flex flex-1 items-center border-t border-[#262626] pb-[2px]">
        <div className="ml-[961px] flex h-[20px] w-[22px] items-center justify-center rounded-[2px] border border-[#262626] bg-[#333]">
          <svg width="9" height="9" viewBox="0 0 9 9" stroke="#a8a8a8" strokeWidth="2.600">
            <path d="M1 1l7 7M8 1L1 8" />
          </svg>
        </div>
        <div className="ml-[2px] mt-[2px] h-[22px] w-[930px] border border-[#141414] bg-[#1b1b1b] shadow-[inset_0_1px_0_#333]" />
      </div>
    </div>
  );
}
